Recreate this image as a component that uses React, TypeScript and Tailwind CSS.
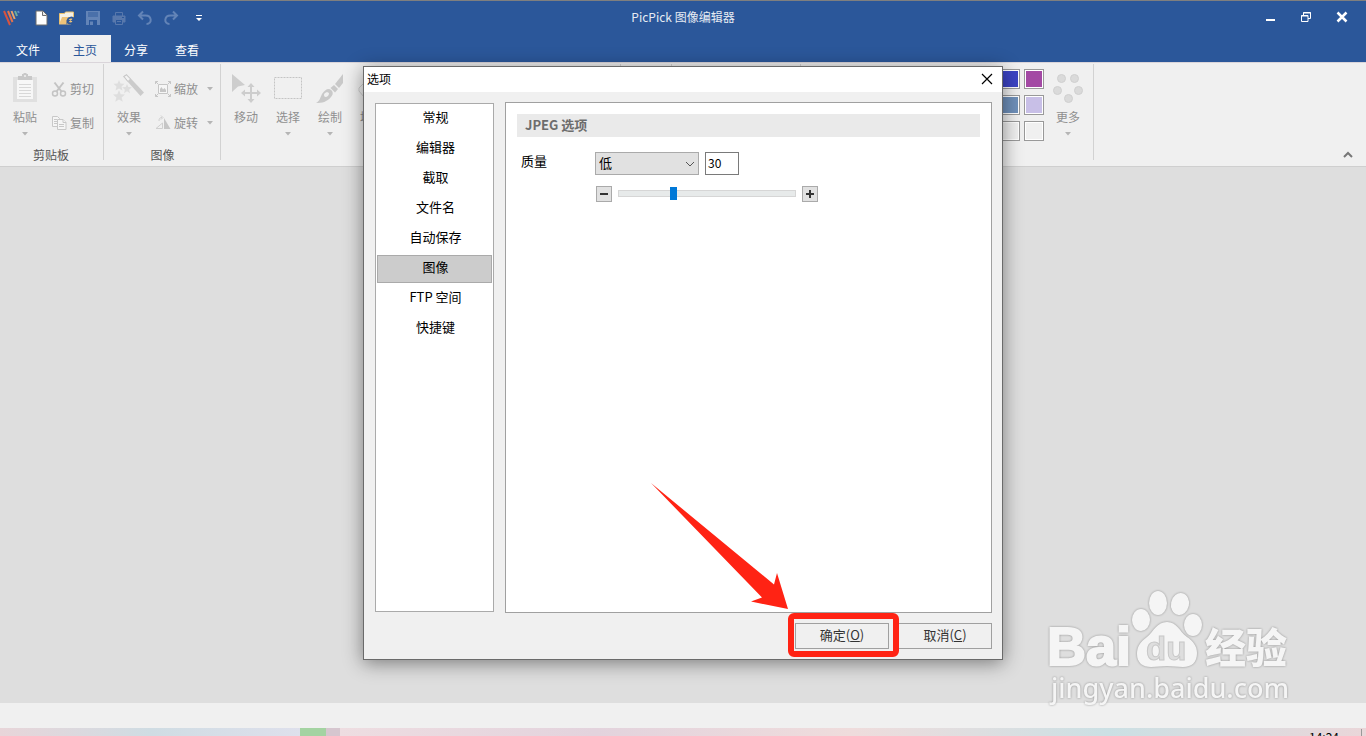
import { useState } from "react";
import type { ReactNode } from "react";

const menuTabs = ["文件", "主页", "分享", "查看"];

const optionPages = ["常规", "编辑器", "截取", "文件名", "自动保存", "图像", "FTP 空间", "快捷键"];

const swatches = [
  { name: "靛蓝", color: "bg-[#3d44c4]" },
  { name: "紫色", color: "bg-[#a349a4]" },
  { name: "蓝灰", color: "bg-[#6f90ba]" },
  { name: "淡紫", color: "bg-[#c8bfe7]" },
  { name: "空 1", color: "bg-[#f0f0f0]" },
  { name: "空 2", color: "bg-[#f0f0f0]" },
];

function LogoIcon() {
  return (
    <svg width="18" height="18" viewBox="0 0 18 18" fill="none" strokeWidth="2" aria-hidden="true">
      <path d="M2 2l6 14" stroke="#d9533f" />
      <path d="M6 2l4.500 11" stroke="#e8734a" />
      <path d="M9.500 2l3.200 8" stroke="#e9a36a" />
      <path d="M13 2l2 5" stroke="#6fae9b" />
      <path d="M16 2l.8 2" stroke="#5d8fc4" />
    </svg>
  );
}

function NewIcon() {
  return (
    <svg width="16" height="16" viewBox="0 0 16 16" aria-hidden="true">
      <path d="M3 1h7l4 4v10H3z" fill="#fff" stroke="#6d6d6d" />
      <path d="M9.500 1.500v4h4" fill="#e8e8e8" stroke="#6d6d6d" />
    </svg>
  );
}

function OpenIcon() {
  return (
    <svg width="18" height="16" viewBox="0 0 18 16" aria-hidden="true">
      <path d="M1.500 14V3.500h5l1-1.500h8V7" fill="#f4f0e6" stroke="#e9c06f" />
      <path d="M1 14.500l3-7.500h12l-3 7.500z" fill="#ecc27a" />
      <path d="M9.500 10c1.500-3 5-3 6.500-1" fill="none" stroke="#2b579a" strokeWidth="2" />
      <path d="M17.500 6v5h-5zM8.500 14.500v-4.500h4z" fill="#2b579a" />
      <path d="M16 11.500c-1.500 2.500-4.500 2.500-6 1" fill="none" stroke="#2b579a" strokeWidth="2" />
    </svg>
  );
}

function SaveIcon() {
  return (
    <svg width="16" height="16" viewBox="0 0 16 16" aria-hidden="true">
      <path d="M1 1h14v14H1z" fill="#6384b7" />
      <path d="M3 2h10v5H3z" fill="#4a70aa" />
      <path d="M4 10h8v5H4z" fill="#2b579a" />
      <path d="M5 11.500h3V15H5z" fill="#6384b7" />
    </svg>
  );
}

function PrintIcon() {
  return (
    <svg width="16" height="16" viewBox="0 0 16 16" fill="none" stroke="#5878ac" aria-hidden="true">
      <path d="M4.500 6V2.500h7V6" />
      <path d="M2 6h12v6H2z" fill="#5878ac" />
      <path d="M4.500 9.500h7v5h-7z" fill="#2b579a" />
      <path d="M6 11.500h4" />
      <path d="M11 7.500h2" stroke="#2b579a" />
    </svg>
  );
}

function UndoIcon({ redo = false }: { redo?: boolean }) {
  return (
    <svg width="16" height="16" viewBox="0 0 16 16" fill="none" stroke="#6384b7" strokeWidth="2" aria-hidden="true">
      <path
        d={
          redo
            ? "M10 1.500L14 5.500l-4 4M14 5.500H7.500C1 5.500.5 14 6.500 14"
            : "M6 1.500L2 5.500l4 4M2 5.500h6.500C15 5.500 15.500 14 9.500 14"
        }
      />
    </svg>
  );
}

function QuickMenuIcon() {
  return (
    <svg width="8" height="8" viewBox="0 0 8 8" fill="#fff" aria-hidden="true">
      <path d="M1 1h6v1H1zM1 4h6L4 7z" />
    </svg>
  );
}

function DownArrow() {
  return (
    <svg width="6" height="4" viewBox="0 0 6 4" className="shrink-0" aria-hidden="true">
      <path d="M0 0h6L3 3.500z" fill="#b5b5b5" />
    </svg>
  );
}

function PasteIcon() {
  return (
    <svg width="24" height="32" viewBox="0 0 24 32" aria-hidden="true">
      <path d="M0 5h24v25H0z" fill="#e0e0e0" />
      <path d="M4 8h16v19H4z" fill="#f7f7f7" />
      <path d="M5 4h4V2h1l1-1h2l1 1h1v2h4v4H5z" fill="#c8c8c8" />
      <circle cx="12" cy="4" r="1" fill="#f0f0f0" />
      <path d="M6 12.500h12M6 15.500h12M6 18.500h12M6 21.500h12M6 24.500h12" stroke="#d8d8d8" />
    </svg>
  );
}

function CutIcon() {
  return (
    <svg width="16" height="16" viewBox="0 0 16 16" fill="none" stroke="#c4c4c4" strokeWidth="1.500" aria-hidden="true">
      <circle cx="4" cy="12.500" r="2.500" />
      <circle cx="12" cy="12.500" r="2.500" />
      <path d="M5.500 10.500L12.500 1.500M10.500 10.500L3.500 1.500" strokeWidth="2" />
    </svg>
  );
}

function CopyIcon() {
  return (
    <svg width="16" height="16" viewBox="0 0 16 16" fill="#f5f5f5" stroke="#c8c8c8" aria-hidden="true">
      <path d="M1.500 1.500h5l2 2v8h-7z" />
      <path d="M3 4.500h3M3 6.500h3M3 8.500h3" />
      <path d="M6.500 4.500h5.500l3 3v7H6.500z" />
      <path d="M12 4.500v3h3M8 9.500h5M8 11.500h5" />
    </svg>
  );
}

function EffectIcon() {
  return (
    <svg width="32" height="32" viewBox="0 0 32 32" aria-hidden="true">
      <path d="M10 4.500l3.500-2.500L31 20.500 27.500 24z" fill="#cbcbcb" />
      <path d="M11 4.500l2.500-1.500 4 4-2.500 2.500z" fill="#f3f3f3" stroke="#c8c8c8" />
      <g fill="#dedede">
        <path d="M6 8l1.500 3.500 4 .3-3 2.700 1 4L6 16.500 2.500 18.500l1-4-3-2.700 4-.3z" />
        <path d="M14 12l1.300 3 3.500.3-2.700 2.500.9 3.500-3-2-3 2 .9-3.500-2.700-2.500 3.500-.3z" />
        <path d="M6 18l1.700 4.200 4.300.3-3.400 2.900 1.200 4.400L6 27.500l-3.800 2.300 1.200-4.400L0 22.500l4.300-.3z" />
      </g>
    </svg>
  );
}

function ScaleIcon() {
  return (
    <svg width="16" height="16" viewBox="0 0 16 16" fill="none" stroke="#c6c6c6" aria-hidden="true">
      <path d="M3.500 3.500h9v9h-9z" fill="#f6f6f6" />
      <path d="M.5 3V.5H3M.5.5L3 3M13 .5h2.500V3M15.500.5L13 3M.5 13v2.500H3M.5 15.500L3 13M13 15.500h2.500V13M15.500 15.500L13 13" />
      <path d="M5 11V8l1.500-2L8 8.500 9.500 7l1.500 2v2z" fill="#c6c6c6" stroke="none" />
    </svg>
  );
}

function RotateIcon() {
  return (
    <svg width="16" height="16" viewBox="0 0 16 16" fill="none" stroke="#cfcfcf" aria-hidden="true">
      <path d="M9 3v11h6.500z" fill="#c6c6c6" stroke="none" />
      <path d="M7.500 8v5.500h-6.500z" />
      <path d="M4 6c0-2.500 1-3.500 3-3.500M6 .5l2 2-2 2" />
    </svg>
  );
}

function MoveIcon() {
  return (
    <svg width="32" height="32" viewBox="0 0 32 32" fill="#cdcdcd" aria-hidden="true">
      <path d="M2 2l13 11-7 1.500-6 5.500z" />
      <path d="M21 11l3.500 4H22v5h5v-2.500l4 3.500-4 3.500V22h-5v5h2.500L21 31l-3.500-4H20v-5h-5v2.500L11 21l4-3.500V20h5v-5h-2.500z" />
    </svg>
  );
}

function SelectIcon() {
  return (
    <svg width="32" height="32" viewBox="0 0 32 32" fill="none" stroke="#c4c4c4" aria-hidden="true">
      <path d="M2.500 5.500h27v21h-27z" strokeDasharray="2 1" />
    </svg>
  );
}

function DrawIcon() {
  return (
    <svg width="32" height="32" viewBox="0 0 32 32" fill="#c9c9c9" aria-hidden="true">
      <path d="M29 2v9l-4 5-4-4z" />
      <path d="M20 13l4 4-3 3.500-4.500-4.500z" />
      <path d="M15 17c4 1 5 5 2 8-4 5-9 6-15 6 4-2 4-5 6-9 2-3 4-5 7-5z" />
      <path d="M13 20c-3 1-4 3-2 5 3 0 4-2 4-4z" fill="#f0f0f0" />
    </svg>
  );
}

function FillIcon() {
  return (
    <svg width="32" height="32" viewBox="0 0 32 32" fill="none" stroke="#cfcfcf" aria-hidden="true">
      <path d="M3 19v-3L14 5l11 11-9 9H8z" />
    </svg>
  );
}

function MoreColorsIcon() {
  return (
    <svg width="32" height="32" viewBox="0 0 32 32" fill="#dadada" stroke="#d0d0d0" aria-hidden="true">
      <circle cx="9.500" cy="6.500" r="4" />
      <circle cx="22.500" cy="6.500" r="4" />
      <circle cx="5.500" cy="18.500" r="4" />
      <circle cx="26.500" cy="18.500" r="4" />
      <circle cx="16.500" cy="26.500" r="4" />
    </svg>
  );
}

function BigButton({ icon, label, arrow = true }: { icon: ReactNode; label: string; arrow?: boolean }) {
  return (
    <button className="flex w-[42px] flex-col items-center text-[#8f8f8f]">
      <span className="flex h-8 items-center">{icon}</span>
      <span className="mt-[5px] leading-4">{label}</span>
      <span className="mt-[7px] h-1">{arrow && <DownArrow />}</span>
    </button>
  );
}

function SmallButton({ icon, label, arrow = false }: { icon: ReactNode; label: string; arrow?: boolean }) {
  return (
    <button className="flex h-[34px] items-center gap-[3px] text-[#8f8f8f]">
      {icon}
      <span>{label}</span>
      {arrow && (
        <span className="ml-[6px]">
          <DownArrow />
        </span>
      )}
    </button>
  );
}

function RibbonGroup({ label, className, children }: { label?: string; className: string; children?: ReactNode }) {
  return (
    <div className={`relative flex shrink-0 flex-col pb-[3px] pt-[9px] ${className}`}>
      <div className="flex h-[75px] items-start">{children}</div>
      <div className="h-4 text-center leading-4 text-[#555]">{label}</div>
      <div className="absolute bottom-[6px] right-0 top-px w-px bg-[#d2d2d2]" />
    </div>
  );
}

function TitleBar() {
  return (
    <header className="border-t border-[#7f7f7f] bg-[#2b579a] text-white">
      <div className="grid h-[34px] grid-cols-[1fr_auto_1fr] items-center">
        <div className="flex items-center pl-[2px]">
          <LogoIcon />
          <div className="ml-2 flex items-center">
            <button aria-label="新建" className="flex w-[26px] justify-center"><NewIcon /></button>
            <button aria-label="打开" className="flex w-[26px] justify-center"><OpenIcon /></button>
            <button aria-label="保存" className="flex w-[26px] justify-center"><SaveIcon /></button>
            <button aria-label="打印" className="flex w-[26px] justify-center"><PrintIcon /></button>
            <button aria-label="撤销" className="flex w-[26px] justify-center"><UndoIcon /></button>
            <button aria-label="重做" className="flex w-[26px] justify-center"><UndoIcon redo /></button>
            <button aria-label="自定义" className="ml-[2px] flex w-[26px] justify-center"><QuickMenuIcon /></button>
          </div>
        </div>
        <h1 className="pb-[2px] text-[#e6ebf3]">PicPick 图像编辑器</h1>
        <div className="flex justify-end pb-[2px] pr-[6px]">
          <button aria-label="最小化" className="flex w-9 justify-center">
            <svg width="12" height="12" viewBox="0 0 12 12"><path d="M2 8h9v2H2z" fill="#fff" /></svg>
          </button>
          <button aria-label="还原" className="flex w-9 justify-center">
            <svg width="12" height="12" viewBox="0 0 12 12" fill="none" stroke="#fff">
              <path d="M3.500 4V1.500h7v6H8M3 2h8" />
              <path d="M1.500 4.500H8v6H1.500zM1 5h7" />
            </svg>
          </button>
          <button aria-label="关闭" className="flex w-9 justify-center">
            <svg width="12" height="12" viewBox="0 0 12 12"><path d="M1.500 1.500l9 9M10.500 1.500l-9 9" stroke="#fff" strokeWidth="2.500" /></svg>
          </button>
        </div>
      </div>
      <nav className="flex h-[27px] pl-[9px]">
        {menuTabs.map((tab) => (
          <button
            key={tab}
            className={`w-[51px] leading-[29px] ${
              tab === "主页" ? "-mb-px bg-[#f0f0f0] pr-px text-[#2b579a]" : "pr-px first:pr-[13px]"
            }`}
          >
            {tab}
          </button>
        ))}
      </nav>
    </header>
  );
}

function Ribbon() {
  return (
    <div className="relative flex overflow-hidden border-b border-t border-b-[#cfcfcf] border-t-[#dad5da] bg-[#f0f0f0]">
      <RibbonGroup label="剪贴板" className="w-[104px] pr-[2px]">
        <div className="flex pl-1">
          <BigButton icon={<PasteIcon />} label="粘贴" />
          <div className="ml-[5px]">
            <SmallButton icon={<CutIcon />} label="剪切" />
            <SmallButton icon={<CopyIcon />} label="复制" />
          </div>
        </div>
      </RibbonGroup>
      <RibbonGroup label="图像" className="w-[117px]">
        <div className="flex pl-1">
          <BigButton icon={<EffectIcon />} label="效果" />
          <div className="ml-[5px]">
            <SmallButton icon={<ScaleIcon />} label="缩放" arrow />
            <SmallButton icon={<RotateIcon />} label="旋转" arrow />
          </div>
        </div>
      </RibbonGroup>
      <RibbonGroup className="w-[400px]">
        <div className="flex pl-1">
          <BigButton icon={<MoveIcon />} label="移动" arrow={false} />
          <BigButton icon={<SelectIcon />} label="选择" />
          <BigButton icon={<DrawIcon />} label="绘制" />
          <BigButton icon={<FillIcon />} label="填充" />
        </div>
      </RibbonGroup>
      <RibbonGroup className="w-[51px]" />
      <RibbonGroup className="w-[129px]" />
      <RibbonGroup className="w-[293px]">
        <div className="-mt-[3px] ml-auto grid grid-cols-2 gap-x-1 gap-y-[6px]">
          {swatches.map((swatch) => (
            <button key={swatch.name} aria-label={swatch.name} className="size-5 border border-[#999] bg-white p-px">
              <span className={`block size-full ${swatch.color}`} />
            </button>
          ))}
        </div>
        <div className="ml-[3px] mr-[5px]">
          <BigButton icon={<MoreColorsIcon />} label="更多" />
        </div>
      </RibbonGroup>
      <button aria-label="折叠功能区" className="mb-[7px] ml-auto mr-[13px] self-end">
        <svg width="10" height="8" viewBox="0 0 10 8" fill="none" stroke="#777" strokeWidth="2">
          <path d="M1 6l4-4 4 4" />
        </svg>
      </button>
    </div>
  );
}

function Watermark() {
  return (
    <div className="absolute bottom-[27px] right-[68px]">
      <svg
        width="250"
        height="124"
        viewBox="0 0 250 124"
        fill="#f5f5f5"
        className="drop-shadow-[0_0_1px_rgba(0,0,0,0.35)]"
      >
        <text x="-1" y="80" stroke="#f5f5f5" strokeWidth="2" fontFamily="Liberation Sans, sans-serif" fontWeight="700" fontSize="54">Bai</text>
        <ellipse cx="93" cy="35" rx="9" ry="11" />
        <ellipse cx="110" cy="18" rx="9" ry="12" />
        <ellipse cx="132" cy="19" rx="9" ry="11" transform="rotate(12 132 19)" />
        <ellipse cx="145" cy="40" rx="9" ry="11" />
        <path d="M119 37c-10 0-13 9-20 15-7 5-10 10-10 17 0 9 6 13 14 13 6 0 10-1 16-1s10 1 16 1c9 0 14-5 14-14 0-7-4-12-10-16-8-6-10-15-20-15z" />
        <text x="98" y="75" fill="#dedede" stroke="#c8c8c8" fontFamily="Liberation Sans, sans-serif" fontWeight="700" fontSize="33">du</text>
        <text x="157" y="78" fontFamily="Noto Sans CJK SC, sans-serif" fontWeight="900" fontSize="41">经验</text>
        <text x="3" y="113" fontFamily="Noto Sans, sans-serif" fontWeight="500" fontSize="27">jingyan.baidu.com</text>
      </svg>
    </div>
  );
}

function OptionsDialog() {
  const [page, setPage] = useState("图像");
  const [level, setLevel] = useState("低");
  const [quality, setQuality] = useState(30);

  return (
    <div
      role="dialog"
      aria-label="选项"
      className="relative flex w-[640px] max-w-full flex-col border border-[#6a6a6a] bg-[#f0f0f0] text-[13px] text-black shadow-[0_3px_18px_rgba(0,0,0,0.45)]"
    >
      <div className="flex h-[25px] items-center justify-between bg-white pb-[2px] pl-[3px] pr-[9px] text-xs">
        <h2>选项</h2>
        <button aria-label="关闭">
          <svg width="12" height="12" viewBox="0 0 12 12"><path d="M1 1l10 10M11 1L1 11" stroke="#000" strokeWidth="1.200" /></svg>
        </button>
      </div>

      <div className="flex gap-[11px] pb-[9px] pl-[11px] pr-[10px] pt-[10px]">
        <ul className="mb-px mt-px flex w-[119px] shrink-0 flex-col gap-[2px] border border-[#aaa] bg-white p-px">
          {optionPages.map((name) => (
            <li key={name}>
              <button
                onClick={() => setPage(name)}
                className={`block h-7 w-full border pb-[5px] pl-[2px] leading-[21px] ${
                  name === page ? "border-[#aaa] bg-[#ccc]" : "border-transparent"
                }`}
              >
                {name}
              </button>
            </li>
          ))}
        </ul>

        <section className="min-h-[511px] flex-1 border border-[#a0a0a0] bg-white p-[11px]">
          <h3 className="h-[23px] bg-[#eaeaea] pl-2 font-bold leading-[21px] text-[#6d6d6d]">JPEG 选项</h3>
          <div className="mt-[15px] flex pl-1">
            <label htmlFor="level" className="w-[74px] leading-[18px]">质量</label>
            <div>
              <div className="flex gap-[6px]">
                <div className="relative">
                  <select
                    id="level"
                    value={level}
                    onChange={(e) => setLevel(e.target.value)}
                    className="h-[23px] w-[104px] appearance-none border border-[#aaa] bg-[#e1e1e1] pb-[2px] pl-[3px]"
                  >
                    <option>低</option>
                    <option>中</option>
                    <option>高</option>
                  </select>
                  <svg width="10" height="6" viewBox="0 0 10 6" fill="none" stroke="#555" className="pointer-events-none absolute right-1 top-[9px]">
                    <path d="M1 1l4 4 4-4" />
                  </svg>
                </div>
                <input
                  aria-label="质量值"
                  value={quality}
                  onChange={(e) => setQuality(Number(e.target.value) || 0)}
                  className="h-[23px] w-[34px] border border-[#7a7a7a] bg-white pb-[2px] pl-[2px] text-xs"
                />
              </div>
              <div className="mt-[11px] flex items-start gap-[6px] pl-px">
                <button
                  aria-label="降低"
                  onClick={() => setQuality(Math.max(0, quality - 1))}
                  className="flex size-4 items-center justify-center border border-[#aaa] bg-[#e1e1e1]"
                >
                  <svg width="8" height="8" viewBox="0 0 8 8"><path d="M0 3h8v2H0z" fill="#333" /></svg>
                </button>
                <input
                  type="range"
                  aria-label="质量滑块"
                  min={0}
                  max={100}
                  value={quality}
                  onChange={(e) => setQuality(Number(e.target.value))}
                  className="h-[15px] w-[178px] appearance-none bg-transparent [&::-webkit-slider-runnable-track]:h-[7px] [&::-webkit-slider-runnable-track]:border [&::-webkit-slider-runnable-track]:border-[#d6d6d6] [&::-webkit-slider-runnable-track]:bg-[#e7eaea] [&::-webkit-slider-thumb]:-mt-1 [&::-webkit-slider-thumb]:h-[13px] [&::-webkit-slider-thumb]:w-[7px] [&::-webkit-slider-thumb]:appearance-none [&::-webkit-slider-thumb]:bg-[#0078d7]"
                />
                <button
                  aria-label="提高"
                  onClick={() => setQuality(Math.min(100, quality + 1))}
                  className="flex size-4 items-center justify-center border border-[#aaa] bg-[#e1e1e1]"
                >
                  <svg width="8" height="8" viewBox="0 0 8 8"><path d="M0 3h3V0h2v3h3v2H5v3H3V5H0z" fill="#333" /></svg>
                </button>
              </div>
            </div>
          </div>
        </section>
      </div>

      <div className="flex justify-end gap-[9px] pb-[10px] pr-[10px] pt-px text-[#333]">
        <div className="relative">
          <button className="h-[26px] w-[94px] border border-[#a0a0a0] pb-[2px] leading-[22px]">
            确定(<u>O</u>)
          </button>
          {/* highlight frame and arrow drawn over the window */}
          <div className="pointer-events-none absolute -bottom-2 -left-[7px] -right-[10px] -top-[10px] rounded-md border-[6px] border-[#ff2314]" />
          <svg width="138" height="128" viewBox="0 0 138 128" className="pointer-events-none absolute bottom-[38px] right-[101px]">
            <path d="M1 0l123 101.500L127 90l11 36-37-7.500 11-4z" fill="#ff2314" />
          </svg>
        </div>
        <button className="h-[26px] w-[94px] border border-[#a0a0a0] pb-[2px] leading-[22px]">
          取消(<u>C</u>)
        </button>
      </div>
    </div>
  );
}

export default function App() {
  return (
    <div className="relative flex min-h-screen flex-col overflow-hidden bg-[#dedede] font-['Noto_Sans_CJK_SC',sans-serif] text-xs">
      <TitleBar />
      <Ribbon />
      <main className="flex-1" />
      <div className="h-[25px] bg-[#f0f0f0]" />
      <footer className="flex h-2 overflow-hidden">
        <div className="w-[300px] bg-linear-to-r from-[#e8d5d9] via-[#cfdce3] to-[#dee0ec]" />
        <div className="w-[26px] bg-[#a4d3a2]" />
        <div className="w-[14px] bg-[#d6c6cf]" />
        <div className="flex-1 bg-linear-to-r from-[#eedde1] via-[#e3d3dd] to-[#efdcdc]" />
        <div className="flex flex-1 justify-end bg-linear-to-r from-[#efdcdc] via-[#cbe0e4] to-[#ead6d9] pr-[4px]">
          <span className="mt-px w-[53px] border-r border-[#999] text-black">14:24</span>
        </div>
      </footer>
      <Watermark />
      <div className="absolute inset-x-0 top-[66px] flex justify-center">
        <OptionsDialog />
      </div>
    </div>
  );
}
